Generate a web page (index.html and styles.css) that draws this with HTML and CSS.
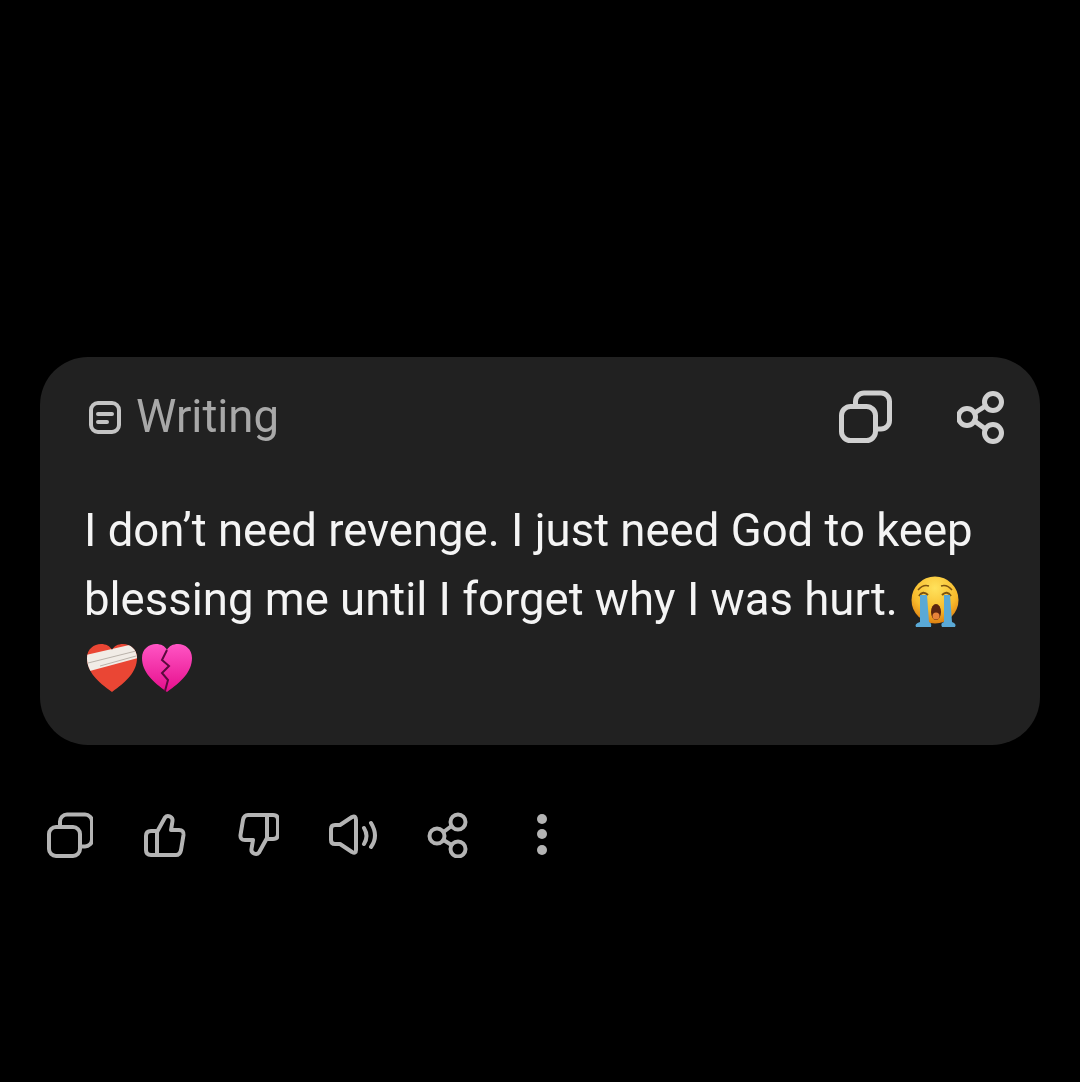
FILE: index.html
```html
<!DOCTYPE html>
<html lang="en">
<head>
	<meta charset="UTF-8" />
	<title>Writing</title>
	<link rel="stylesheet" href="styles.css">
</head>
<body>
	<!-- Card -->
	<div class="card">
		<div class="card-head">
			<div class="tag">
				<svg class="tag-icon" width="32" height="34" viewBox="0 0 32 34" fill="none">
					<rect x="2" y="3" width="28" height="29" rx="7" />
					<path d="M9 14h14M9 22h9" />
				</svg>
				<span class="tag-label">Writing</span>
			</div>
			<div class="head-tools">
				<svg class="tool" width="54" height="54" viewBox="0 0 54 54" fill="none">
					<rect x="2.500" y="16.500" width="34" height="34" rx="9" />
					<path d="M16.500 15v-3.500a8.500 8.500 0 0 1 8.500-8.500h17a8.500 8.500 0 0 1 8.500 8.500v19a8.500 8.500 0 0 1-8.500 8.500h-5" />
				</svg>
				<svg class="tool" width="50" height="54" viewBox="0 0 50 54" fill="none">
					<circle cx="36" cy="12" r="8.500" />
					<circle cx="10" cy="27" r="8.500" />
					<circle cx="36" cy="43" r="8.500" />
					<path d="M17.500 23L28.500 16M17.500 31L28.500 39" />
				</svg>
			</div>
		</div>
		<p class="message">I don’t need revenge. I just need God to keep blessing me until I forget why I was hurt.
			<svg class="emoji" width="52" height="52" viewBox="0 0 52 52">
				<defs>
					<radialGradient id="face" cx="0.5" cy="0.25" r="0.8">
						<stop offset="0" stop-color="#ffe25c" />
						<stop offset="0.6" stop-color="#f8bb2c" />
						<stop offset="1" stop-color="#d9750c" />
					</radialGradient>
					<linearGradient id="pink" x1="0" y1="0" x2="0" y2="1">
						<stop offset="0" stop-color="#ff55c4" />
						<stop offset="1" stop-color="#e60e8c" />
					</linearGradient>
					<clipPath id="heart-shape">
						<path d="M26 49C12 39 1 29 1 15C1 6 8 1 15 1C20 1 24 3 26 7C28 3 32 1 37 1C44 1 51 6 51 15C51 29 40 39 26 49Z" />
					</clipPath>
				</defs>
				<circle cx="26" cy="25" r="23.500" fill="url(#face)" />
				<path d="M9 15Q14 9 20 11M43 15Q38 9 32 11" fill="none" stroke="#7d5310" stroke-width="1.500" />
				<path d="M10 21Q14 15 19 20M33 20Q38 15 42 21" fill="none" stroke="#7d5310" stroke-width="2" />
				<path d="M11 20h7l2 27q3 1 2 5H7q-2-3 4-5z" fill="#5aa9d6" />
				<path d="M35 20h6l2 27q5 2 3 5H33q-2-4 2-5z" fill="#5aa9d6" />
				<ellipse cx="27" cy="37" rx="5" ry="8" fill="#5a2410" />
				<ellipse cx="27" cy="41" rx="3.500" ry="3.500" fill="#e8823a" />
			</svg>
			<br />
			<svg class="emoji heart heart-first" width="52" height="50" viewBox="0 0 52 50">
				<g clip-path="url(#heart-shape)">
					<rect width="52" height="50" fill="#ea4634" />
					<path d="M0 12L52 0V15L0 29Z" fill="#f1ece6" />
					<path d="M2 20L50 8M14 23L50 13" stroke="#b9b2aa" stroke-width="1" fill="none" />
				</g>
			</svg><svg class="emoji heart heart-gap" width="52" height="50" viewBox="0 0 52 50">
				<path d="M26 49C12 39 1 29 1 15C1 6 8 1 15 1C20 1 24 3 26 7C28 3 32 1 37 1C44 1 51 6 51 15C51 29 40 39 26 49Z" fill="url(#pink)" />
				<path d="M26 7L21 17L28 23L21 30L27 37L24 48" fill="none" stroke="#5a0a3c" stroke-width="2" />
			</svg>
		</p>
	</div>
	<!-- Actions -->
	<div class="actions">
		<svg class="action" width="46" height="46" viewBox="0 0 46 46" fill="none">
			<rect x="2" y="15" width="31" height="29" rx="7" />
			<path d="M13 13v-3.500a7 7 0 0 1 7-7h18a7 7 0 0 1 7 7v18a7 7 0 0 1-7 7h-3" />
		</svg>
		<svg class="action" width="44" height="46" viewBox="0 0 44 46" fill="none">
			<path d="M15 20L23 5.500Q25 3 28 4.500Q31 6 30.500 9L29 18H37Q42 18 41.500 23L39 38Q38 43 34 43H9Q4 43 4 38V24Q4 19 9 19H15V43" />
		</svg>
		<svg class="action" width="44" height="46" viewBox="0 0 44 46" fill="none">
			<path d="M32 26L24 40.500Q22 43 19 41.500Q16 40 16.500 37L18 28H10Q5 28 5.500 23L8 8Q9 3 13 3H38Q43 3 43 8V22Q43 27 38 27H32V3" />
		</svg>
		<svg class="action" width="50" height="46" viewBox="0 0 50 46" fill="none">
			<path d="M3 17Q3 13 7 13H12L24 5Q28 3 28 8V38Q28 42 24 40L12 32H7Q3 32 3 28Z" />
			<path d="M36 16Q41 24 36 32M43 11Q51 24 43 35" />
		</svg>
		<svg class="action" width="44" height="46" viewBox="0 0 44 46" fill="none">
			<circle cx="31" cy="10" r="7.500" />
			<circle cx="10" cy="24" r="7.500" />
			<circle cx="31" cy="37" r="7.500" />
			<path d="M16.500 20L24.500 14M16.500 28L24.500 33" />
		</svg>
		<svg class="action-more" width="12" height="46" viewBox="0 0 12 46">
			<circle cx="6" cy="7" r="5" />
			<circle cx="6" cy="22" r="5" />
			<circle cx="6" cy="38" r="5" />
		</svg>
	</div>
</body>
</html>
```
FILE: styles.css
```css
body{
	margin: 0;
	padding-top: 357px;
	background: #000000;
	font-family: Roboto, "Liberation Sans", sans-serif;
}

.card{
	margin: 0 40px;
	height: 388px;
	box-sizing: border-box;
	padding: 33px 33px 0 44px;
	background: #212121;
	border-radius: 48px;
	filter: blur(0.5px);
}

.card-head{
	display: flex;
	justify-content: space-between;
	align-items: center;
}

.tag{
	display: flex;
	align-items: center;
	gap: 15px;
	margin-left: 5px;
}

.tag-icon{
	stroke: #c4c4c4;
	stroke-width: 4;
	stroke-linecap: round;
}

.tag-label{
	font-size: 45.500px;
	line-height: 54px;
	color: #a8a8a8;
}

.head-tools{
	display: flex;
	gap: 64px;
}

.tool{
	stroke: #d0d0d0;
	stroke-width: 5;
	stroke-linecap: round;
}

.message{
	margin: 52px 0 0;
	font-size: 45.500px;
	line-height: 69px;
	color: #f4f4f4;
}

.emoji{
	vertical-align: -12px;
}

.heart{
	vertical-align: -9px;
}

.heart-first{
	margin-left: 2px;
}

.heart-gap{
	margin-left: 3px;
}

.actions{
	display: flex;
	align-items: center;
	gap: 49px;
	margin: 67px 0 0 47px;
	filter: blur(0.5px);
}

.action{
	stroke: #b4b4b4;
	stroke-width: 4;
	stroke-linecap: round;
	stroke-linejoin: round;
}

.action-more{
	margin-left: 16px;
	fill: #b4b4b4;
}
```
